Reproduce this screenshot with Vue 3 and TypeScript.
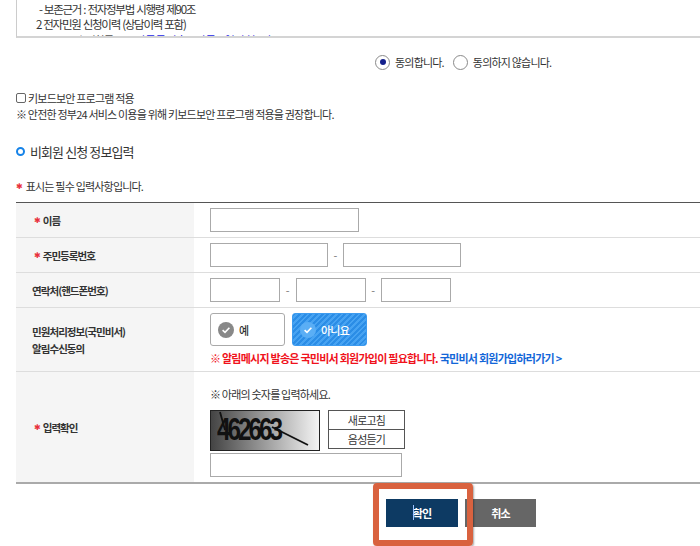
<script setup lang="ts">
</script>

<template>
  <div class="page">
    <div class="terms">
      <p class="t1">- 보존근거 : 전자정부법 시행령 제90조</p>
      <p class="t2">2 전자민원 신청이력 (상담이력 포함)</p>
      <p class="t3">- 수집항목 : <span class="blue">주민등록번호, 이름, 연락처 정보</span></p>
    </div>

    <div class="agree">
      <span class="radio on"></span><span class="rlabel">동의합니다.</span>
      <span class="radio"></span><span class="rlabel">동의하지 않습니다.</span>
    </div>

    <div class="kbd">
      <span class="check"></span><span>키보드보안 프로그램 적용</span>
    </div>
    <p class="note">※ 안전한 정부24 서비스 이용을 위해 키보드보안 프로그램 적용을 권장합니다.</p>

    <h2 class="title"><span class="dot"></span>비회원 신청 정보입력</h2>
    <p class="req"><span class="star">✱</span>표시는 필수 입력사항입니다.</p>

    <div class="table">
      <div class="row r1">
        <div class="th star-th"><span class="star">✱</span>이름</div>
        <div class="td"><span class="box w149"></span></div>
      </div>
      <div class="row r2">
        <div class="th star-th"><span class="star">✱</span>주민등록번호</div>
        <div class="td">
          <span class="box w118"></span><span class="dash">-</span><span class="box w118"></span>
        </div>
      </div>
      <div class="row r3">
        <div class="th plain">연락처(핸드폰번호)</div>
        <div class="td">
          <span class="box w70"></span><span class="dash d3">-</span><span class="box w70"></span><span class="dash d3">-</span><span class="box w70"></span>
        </div>
      </div>
      <div class="row r4">
        <div class="th plain two">민원처리정보(국민비서)<br />알림수신동의</div>
        <div class="td col">
          <div class="choices">
            <div class="choice yes">
              <svg width="16" height="16" viewBox="0 0 16 16"><circle cx="8" cy="8" r="8" fill="#888" /><path d="M4.6 8.2 7 10.4 11.4 5.8" fill="none" stroke="#fff" stroke-width="1.6" /></svg>
              <span>예</span>
            </div>
            <div class="choice no">
              <svg width="16" height="16" viewBox="0 0 16 16"><circle cx="8" cy="8" r="8" fill="#5aaef5" /><path d="M4.6 8.2 7 10.4 11.4 5.8" fill="none" stroke="#fff" stroke-width="1.6" /></svg>
              <span>아니요</span>
            </div>
          </div>
          <p class="warn">※ 알림메시지 발송은 국민비서 회원가입이 필요합니다. <span class="link">국민비서 회원가입하러가기 &gt;</span></p>
        </div>
      </div>
      <div class="row r5">
        <div class="th star-th"><span class="star">✱</span>입력확인</div>
        <div class="td col">
          <p class="hint">※ 아래의 숫자를 입력하세요.</p>
          <div class="captcha-row">
            <div class="captcha">
              <span class="digits">462663</span>
              <svg class="scratch" width="110" height="41" viewBox="0 0 110 41"><path d="M10 2 15 20M62 17 98 35" stroke="#111" stroke-width="1.8" fill="none" /></svg>
            </div>
            <div class="cap-btns">
              <span class="cap-btn">새로고침</span>
              <span class="cap-btn b2">음성듣기</span>
            </div>
          </div>
          <span class="box cap-input"></span>
        </div>
      </div>
    </div>

    <div class="actions">
      <div class="btn ok"><i class="caret"></i>확인</div>
      <div class="btn cancel">취소</div>
      <div class="highlight"></div>
    </div>
  </div>
</template>

<style>
html, body { margin: 0; background: #fff; }
</style>

<style scoped>
* { box-sizing: border-box; }
.page {
  width: 700px;
  height: 546px;
  overflow: hidden;
  padding-left: 16px;
  font-family: "Noto Sans CJK KR", "Noto Sans", sans-serif;
  font-size: 11px;
  color: #333;
  letter-spacing: -0.8px;
}
p, h2 { margin: 0; }
.terms {
  height: 38px;
  overflow: hidden;
  border-left: 1px solid #ccc;
  border-bottom: 2px solid #d4d4d4;
  font-size: 11.5px;
  line-height: 16px;
  letter-spacing: -1.25px;
  word-spacing: 0.8px;
}
.t1 { padding-left: 22px; padding-top: 1px; }
.t2 { padding-left: 19px; margin-top: -1px; }
.t3 { padding-left: 54px; color: #555; margin-top: 0; }
.blue { color: #1a1ae6; margin-left: 5px; letter-spacing: -0.2px; word-spacing: 3px; }
.agree {
  display: flex;
  align-items: center;
  height: 16px;
  margin-top: 16px;
  padding-left: 359px;
}
.radio {
  width: 15px;
  height: 15px;
  border: 1px solid #8a8a8a;
  border-radius: 50%;
  background: #fff;
  position: relative;
}
.radio.on::after {
  content: "";
  position: absolute;
  left: 3.5px;
  top: 3.5px;
  width: 6px;
  height: 6px;
  border-radius: 50%;
  background: #14208c;
}
.rlabel { margin-left: 5px; margin-right: 9px; letter-spacing: -0.8px; }
.kbd {
  display: flex;
  align-items: center;
  gap: 2px;
  height: 16px;
  margin-top: 20px;
}
.check {
  width: 10px;
  height: 10px;
  border: 1px solid #666;
  border-radius: 2px;
}
.note { height: 16px; line-height: 16px; }
.title {
  display: flex;
  align-items: center;
  gap: 5px;
  font-size: 13px;
  font-weight: 400;
  height: 20px;
  margin-top: 19px;
  letter-spacing: -0.9px;
}
.dot {
  width: 9px;
  height: 9px;
  border: 2px solid #1683e8;
  border-radius: 50%;
}
.req {
  display: flex;
  align-items: center;
  height: 16px;
  margin-top: 17px;
  gap: 3px;
}
.star {
  color: #e8323c;
  font-family: "DejaVu Sans", sans-serif;
  font-size: 8px;
  font-weight: 400;
  letter-spacing: 0;
}
.table {
  margin-top: 8px;
  border-top: 1px solid #555;
  border-bottom: 2px solid #aaa;
  width: 684px;
}
.row {
  display: grid;
  grid-template-columns: 178px 1fr;
  border-bottom: 1px solid #ddd;
}
.row:last-child { border-bottom: 0; }
.r1, .r2, .r3 { height: 35px; }
.r4 { height: 64px; }
.r5 { height: 110px; }
.th {
  background: #f5f5f5;
  display: flex;
  align-items: center;
  font-size: 10.5px;
  font-weight: 700;
  color: #333;
  letter-spacing: -0.95px;
}
.star-th { padding-left: 18px; gap: 2px; }
.plain { padding-left: 16px; }
.two { line-height: 17px; }
.td {
  display: flex;
  align-items: center;
  padding-left: 16px;
}
.col { flex-direction: column; align-items: flex-start; justify-content: flex-start; }
.box {
  display: block;
  height: 24px;
  border: 1px solid #aaa;
  background: #fff;
}
.w149 { width: 149px; }
.w118 { width: 118px; }
.w70 { width: 70px; }
.dash { width: 15px; text-align: center; color: #777; letter-spacing: 0; }
.d3 { width: 15.5px; }
.choices { display: flex; gap: 7px; margin-top: 5px; }
.choice {
  width: 75px;
  height: 33px;
  border-radius: 3px;
  display: flex;
  align-items: center;
  gap: 5px;
  padding-left: 7px;
  font-size: 11px;
  font-weight: 500;
}
.yes { border: 1px solid #aaa; background: #fff; }
.no {
  border: 1px solid #3d9bef;
  color: #fff;
  background: repeating-linear-gradient(135deg, #2b8de6 0 2px, #47a3f2 2px 4px);
}
.warn {
  margin-top: 4px;
  font-weight: 700;
  font-size: 11px;
  line-height: 16px;
  color: #f0121c;
  white-space: nowrap;
  letter-spacing: -0.75px;
}
.link { color: #1266d8; }
.hint { margin-top: 14px; height: 16px; line-height: 16px; }
.captcha-row { display: flex; gap: 8px; margin-top: 8px; }
.captcha {
  position: relative;
  width: 110px;
  height: 41px;
  border: 1px solid #222;
  background: linear-gradient(90deg, #444, #f4f4f4);
  overflow: hidden;
}
.digits {
  position: absolute;
  left: 6px;
  top: 0;
  font-family: "Liberation Sans", sans-serif;
  font-size: 32px;
  font-weight: 700;
  line-height: 36px;
  color: #111;
  letter-spacing: -4px;
  transform: scaleX(0.76);
  transform-origin: left center;
}
.scratch { position: absolute; left: -1px; top: -1px; }
.cap-btns { display: flex; flex-direction: column; width: 77px; height: 39px; }
.cap-btn {
  height: 20px;
  border: 1px solid #555;
  text-align: center;
  line-height: 18px;
  background: #fff;
}
.b2 { margin-top: -1px; }
.cap-input { width: 192px; height: 24px; margin-top: 2px; }
.actions {
  position: relative;
  display: flex;
  gap: 7px;
  margin-top: 15px;
  padding-left: 370px;
}
.btn {
  position: relative;
  width: 72px;
  height: 28px;
  color: #fff;
  font-weight: 700;
  display: flex;
  align-items: center;
  justify-content: center;
  font-size: 11px;
}
.ok { background: #0d3a63; }
.cancel { background: #666; width: 71px; }
.caret {
  position: absolute;
  left: 27px;
  top: 6px;
  width: 1px;
  height: 15px;
  background: #9fc3ff;
}
.highlight {
  position: absolute;
  left: 357px;
  top: -16px;
  width: 100px;
  height: 63px;
  border: 6px solid #d9623f;
  border-radius: 4px;
  box-shadow: 1px 1px 2px rgba(0, 0, 0, 0.35);
}
</style>
